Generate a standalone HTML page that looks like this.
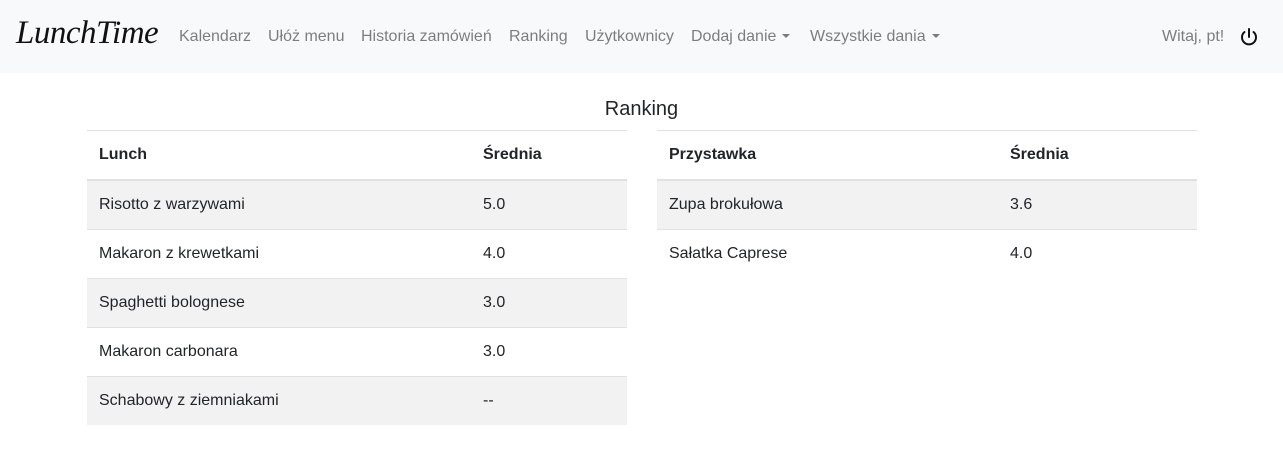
<!DOCTYPE html>
<html><head><meta charset="utf-8"><style>
body{margin:0;font-family:"Liberation Sans",sans-serif;color:#212529;background:#fff;width:1283px;height:467px;overflow:hidden}
.nav{height:73px;background:#f8f9fa;position:relative}
.logo{position:absolute;left:16px;top:15px;font-family:"Liberation Serif",serif;font-style:italic;font-size:33px;color:#111;letter-spacing:-0.5px}
.nav a{position:absolute;top:28px;font-size:16px;color:rgba(0,0,0,.5);white-space:nowrap}
.caret{display:inline-block;width:0;height:0;border-left:4px solid transparent;border-right:4px solid transparent;border-top:4px solid rgba(0,0,0,.5);vertical-align:3px;margin-left:6px}
h1{position:absolute;left:0;width:1283px;text-align:center;top:98px;margin:0;font-size:20px;font-weight:400}
table{position:absolute;top:130px;border-collapse:collapse;font-size:16px;table-layout:fixed}
td,th{height:48px;padding:0 12px;text-align:left;border-top:1px solid #dee2e6}
th{border-bottom:2px solid #dee2e6;height:48px}
tr.s td{background:#f2f2f2}
</style></head><body>
<div class="nav">
<div class="logo">LunchTime</div>
<a style="left:179px">Kalendarz</a>
<a style="left:268px">Ułóż menu</a>
<a style="left:361px">Historia zamówień</a>
<a style="left:509px">Ranking</a>
<a style="left:585px">Użytkownicy</a>
<a style="left:691px">Dodaj danie<span class="caret"></span></a>
<a style="left:810px">Wszystkie dania<span class="caret"></span></a>
<a style="left:1162px">Witaj, pt!</a>
<svg style="position:absolute;left:1239px;top:27px" width="20" height="20" viewBox="0 0 20 20" fill="none" stroke="#111" stroke-width="2" stroke-linecap="round"><path d="M10 2v8"/><path d="M5.5 5a7 7 0 1 0 9 0"/></svg>
</div>
<h1>Ranking</h1>
<table style="left:87px;width:540px">
<colgroup><col style="width:384px"><col style="width:156px"></colgroup>
<tr><th>Lunch</th><th>Średnia</th></tr>
<tr class="s"><td>Risotto z warzywami</td><td>5.0</td></tr>
<tr><td>Makaron z krewetkami</td><td>4.0</td></tr>
<tr class="s"><td>Spaghetti bolognese</td><td>3.0</td></tr>
<tr><td>Makaron carbonara</td><td>3.0</td></tr>
<tr class="s"><td>Schabowy z ziemniakami</td><td>--</td></tr>
</table>
<table style="left:657px;width:540px">
<colgroup><col style="width:341px"><col style="width:199px"></colgroup>
<tr><th>Przystawka</th><th>Średnia</th></tr>
<tr class="s"><td>Zupa brokułowa</td><td>3.6</td></tr>
<tr><td>Sałatka Caprese</td><td>4.0</td></tr>
</table>
</body></html>
